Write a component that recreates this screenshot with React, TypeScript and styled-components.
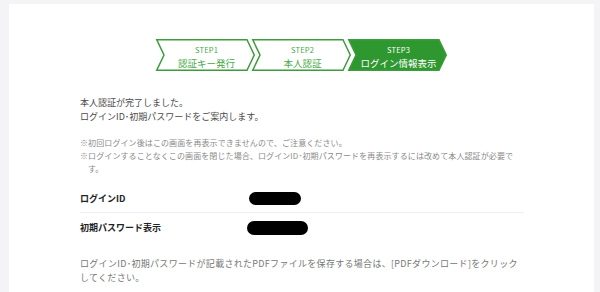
import React from "react";
import styled, { createGlobalStyle } from "styled-components";

const GlobalStyle = createGlobalStyle`
  html, body {
    margin: 0;
    padding: 0;
    background: #f4f4f6;
  }
  body {
    font-family: "Noto Sans CJK JP", "Noto Sans", sans-serif;
    -webkit-font-smoothing: antialiased;
  }
`;

const Card = styled.main`
  margin: 4px 6px 0 9px;
  min-height: 288px;
  background: #ffffff;
  padding: 35px 0 0 71px;
  box-sizing: border-box;
`;

const Content = styled.div`
  width: 444px;
`;

const Steps = styled.ol`
  list-style: none;
  margin: 0 0 25px 0;
  padding: 0;
  display: flex;
  justify-content: center;
  margin-left: -71px;
  width: 585px;
`;

const StepItem = styled.li<{ $active?: boolean }>`
  position: relative;
  width: 99px;
  height: 32px;
  box-sizing: border-box;
  padding: 5px 6px 0 8px;
  display: flex;
  flex-direction: column;
  align-items: center;
  color: ${(p) => (p.$active ? "#ffffff" : "#45a845")};
  & + & {
    margin-left: -3px;
  }
`;

const StepShape = styled.svg`
  position: absolute;
  inset: 0;
  width: 99px;
  height: 32px;
  overflow: visible;
`;

const StepNo = styled.span`
  position: relative;
  font-size: 7.5px;
  line-height: 12px;
  letter-spacing: 0.2px;
`;

const StepLabel = styled.span`
  position: relative;
  font-size: 9.5px;
  line-height: 14px;
  font-weight: 400;
`;

const Lead = styled.p`
  margin: 0 0 12px 0;
  font-size: 9px;
  line-height: 14px;
  color: #4a4a4a;
`;

const Notes = styled.ul`
  list-style: none;
  margin: 0 0 9px 0;
  padding: 0;
`;

const Note = styled.li`
  font-size: 8px;
  line-height: 13px;
  color: #8a8a8a;
  padding-left: 1em;
  text-indent: -1em;
  letter-spacing: 0.1px;
`;

const InfoTable = styled.dl`
  margin: 0 0 15px 0;
  padding: 0;
`;

const InfoRow = styled.div<{ $divider?: boolean }>`
  display: flex;
  align-items: center;
  height: 29px;
  box-sizing: border-box;
  border-bottom: ${(p) => (p.$divider ? "1px solid #efefef" : "none")};
`;

const Label = styled.dt`
  width: 167px;
  font-size: 9px;
  font-weight: 700;
  color: #222;
`;

const Value = styled.dd`
  margin: 0;
  display: flex;
  align-items: center;
`;

const Redacted = styled.span<{ $w: number; $h: number; $dx: number }>`
  display: inline-block;
  width: ${(p) => p.$w}px;
  height: ${(p) => p.$h}px;
  margin-left: ${(p) => p.$dx}px;
  border-radius: 7px;
  background: #000;
`;

const Footer = styled.p`
  margin: 0;
  font-size: 9px;
  line-height: 14px;
  color: #777;
  letter-spacing: 0.3px;
`;

const steps = [
  { no: "STEP1", label: "認証キー発行" },
  { no: "STEP2", label: "本人認証" },
  { no: "STEP3", label: "ログイン情報表示", active: true },
];

export default function App() {
  return (
    <>
      <GlobalStyle />
      <Card>
        <Content>
          <Steps>
            {steps.map((s) => (
              <StepItem key={s.no} $active={s.active}>
                <StepShape viewBox="0 0 99 32" aria-hidden="true">
                  <polygon
                    points="0.75,0.75 91,0.75 98.25,16 91,31.25 0.75,31.25 8,16"
                    fill={s.active ? "#2f972f" : "#ffffff"}
                    stroke="#3a9d3a"
                    strokeWidth="1.5"
                    strokeLinejoin="miter"
                  />
                </StepShape>
                <StepNo>{s.no}</StepNo>
                <StepLabel>{s.label}</StepLabel>
              </StepItem>
            ))}
          </Steps>

          <Lead>
            本人認証が完了しました。
            <br />
            ログインID･初期パスワードをご案内します。
          </Lead>

          <Notes>
            <Note>※初回ログイン後はこの画面を再表示できませんので、ご注意ください。</Note>
            <Note>
              ※ログインすることなくこの画面を閉じた場合、ログインID･初期パスワードを再表示するには改めて本人認証が必要です。
            </Note>
          </Notes>

          <InfoTable>
            <InfoRow $divider>
              <Label>ログインID</Label>
              <Value>
                <Redacted $w={52} $h={13} $dx={2} />
              </Value>
            </InfoRow>
            <InfoRow>
              <Label>初期パスワード表示</Label>
              <Value>
                <Redacted $w={61} $h={14} $dx={0} />
              </Value>
            </InfoRow>
          </InfoTable>

          <Footer>
            ログインID･初期パスワードが記載されたPDFファイルを保存する場合は、[PDFダウンロード]をクリックしてください。
          </Footer>
        </Content>
      </Card>
    </>
  );
}
